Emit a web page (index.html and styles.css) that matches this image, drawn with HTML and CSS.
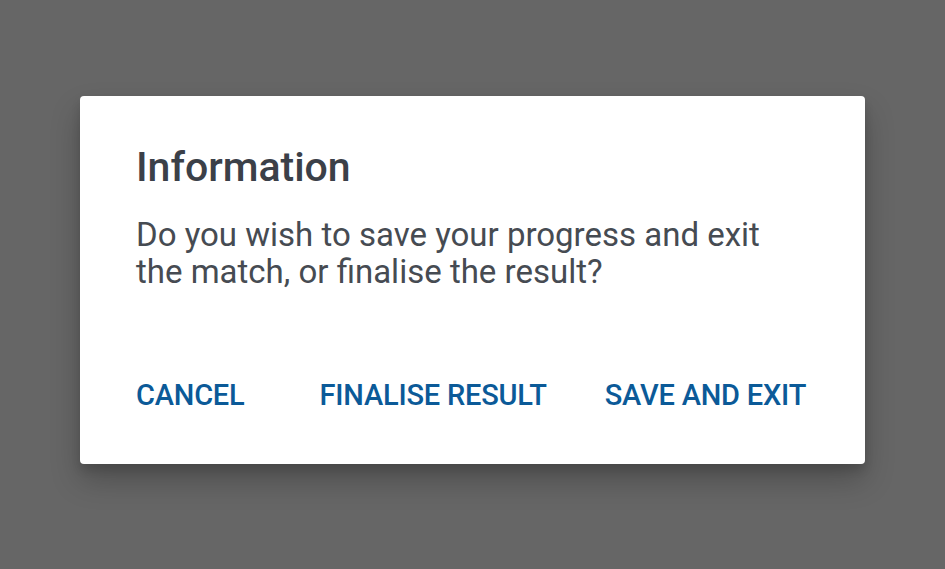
FILE: index.html
```html
<!DOCTYPE html>
<html lang="en">
<head>
  <meta charset="UTF-8" />
  <title>Information</title>
  <link rel="stylesheet" href="styles.css">
</head>
<body>
  <div class="overlay">
    <div class="dialog">
      <h2 class="dialog-title">Information</h2>
      <p class="dialog-message">Do you wish to save your progress and exit<br>the match, or finalise the result?</p>
      <div class="dialog-actions">
        <button class="action action-cancel">CANCEL</button>
        <button class="action">FINALISE RESULT</button>
        <button class="action action-save">SAVE AND EXIT</button>
      </div>
    </div>
  </div>
</body>
</html>
```

FILE: styles.css
```css
html, body {
  margin: 0;
  padding: 0;
  height: 100%;
}
body {
  background: #666666;
  font-family: Roboto, "Liberation Sans", sans-serif;
}
.overlay {
  padding: 96px 0 0 80px;
}
.dialog {
  width: 785px;
  height: 368px;
  box-sizing: border-box;
  background: #ffffff;
  border-radius: 4px;
  box-shadow: 0 16px 30px rgba(0, 0, 0, 0.24), 0 6px 10px rgba(0, 0, 0, 0.12);
  padding: 47px 40px 0 56px;
}
.dialog-title {
  margin: 0;
  font-size: 41px;
  font-weight: 500;
  line-height: 48px;
  color: #3b4048;
}
.dialog-message {
  margin: 25px 0 0 0;
  font-size: 33px;
  line-height: 37px;
  color: #464b52;
}
.dialog-actions {
  display: flex;
  align-items: center;
  margin-top: 88px;
}
.action {
  flex-shrink: 0;
  white-space: nowrap;
  border: none;
  background: none;
  padding: 0;
  font-family: inherit;
  font-size: 29px;
  font-weight: 500;
  letter-spacing: -0.2px;
  color: #0b5a98;
  cursor: pointer;
}
.action-cancel {
  margin-right: 75px;
}
.action-save {
  margin-left: 58px;
}
```
